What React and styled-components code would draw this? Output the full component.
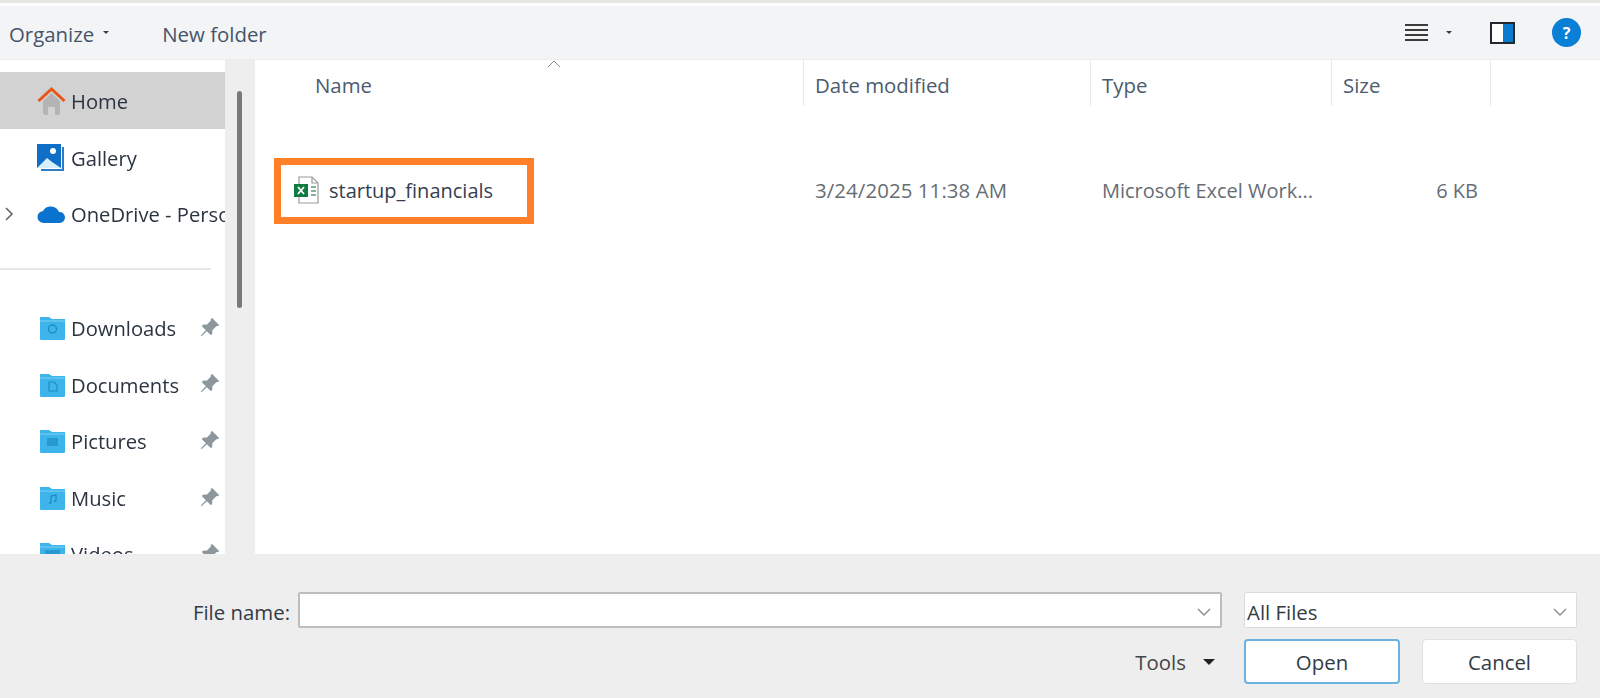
import React from "react";
import styled, { createGlobalStyle } from "styled-components";
import { BsPinAngleFill } from "react-icons/bs";

const GlobalStyle = createGlobalStyle`
  html, body { margin: 0; padding: 0; background: #fff; }
  body { font-family: "Open Sans", "Noto Sans", sans-serif; overflow: hidden; }
`;

const Dialog = styled.div`
  width: 1600px;
  height: 698px;
  display: flex;
  flex-direction: column;
  overflow: hidden;
  filter: blur(0.65px);
`;

const TopStrip = styled.div`
  height: 3px;
  background: #e4e6e2;
  margin-bottom: 3px;
  flex: none;
`;

const Toolbar = styled.div`
  height: 54px;
  flex: none;
  background: #f3f4f6;
  border-bottom: 1px solid #eceef0;
  box-sizing: border-box;
  display: flex;
  align-items: center;
  padding: 0 19px 0 9px;
  color: #44546a;
  font-size: 20.4px;
`;

const ToolText = styled.span`
  padding-top: 2px;
`;

const Caret = styled.span`
  width: 0;
  height: 0;
  border-left: ${(p) => p.$size || 3}px solid transparent;
  border-right: ${(p) => p.$size || 3}px solid transparent;
  border-top: ${(p) => p.$size || 3}px solid ${(p) => p.$color || "#333f50"};
  margin-left: ${(p) => p.$left || 0}px;
  margin-right: ${(p) => p.$right || 0}px;
`;

const ToolSpacer = styled.div`
  flex: 1;
`;

const ListLines = styled.div`
  width: 23px;
  height: 18px;
  display: flex;
  flex-direction: column;
  justify-content: space-between;
  span {
    height: 2px;
    background: #3a3a3a;
  }
`;

const PaneToggle = styled.div`
  width: 25px;
  height: 22px;
  box-sizing: border-box;
  border: 2px solid #22282e;
  display: flex;
  margin-right: 37px;
  i {
    flex: 1;
    background: #fff;
  }
  b {
    flex: 1;
    background: #0a7ccf;
  }
`;

const HelpButton = styled.div`
  width: 29px;
  height: 29px;
  border-radius: 50%;
  background: #0a7fd6;
  color: #fff;
  font-size: 16px;
  font-weight: 700;
  display: flex;
  align-items: center;
  justify-content: center;
`;

const Main = styled.div`
  flex: 1;
  min-height: 0;
  display: flex;
`;

const Sidebar = styled.div`
  width: 225px;
  flex: none;
  padding-top: 12px;
  overflow: hidden;
  background: #fff;
`;

const NavRow = styled.div`
  height: 56.6px;
  box-sizing: border-box;
  display: flex;
  align-items: center;
  position: relative;
  padding-top: 2px;
  padding-left: ${(p) => p.$indent || 37}px;
  background: ${(p) => (p.$active ? "#d2d2d2" : "transparent")};
  color: #2b3440;
  font-size: 20.2px;
  white-space: nowrap;
  overflow: hidden;
`;

const NavIcon = styled.div`
  width: ${(p) => p.$width || 34}px;
  flex: none;
  display: flex;
  align-items: center;
`;

const Expand = styled.svg`
  position: absolute;
  left: 4px;
  top: 22px;
`;

const NavPin = styled(BsPinAngleFill)`
  position: absolute;
  left: 199px;
  top: 18px;
  color: #8c979e;
  font-size: 21px;
`;

const NavDivider = styled.div`
  height: 2px;
  width: 211px;
  background: #e6e6e6;
  margin: 26.5px 0 28.5px;
`;

const ScrollTrack = styled.div`
  width: 30px;
  flex: none;
  background: #eeeeee;
  margin-right: 1px;
  padding: 31px 0 0 12px;
  box-sizing: border-box;
`;

const ScrollThumb = styled.div`
  width: 5px;
  height: 217px;
  border-radius: 3px;
  background: #77797b;
`;

const FilePane = styled.div`
  flex: 1;
  min-width: 0;
  background: #fff;
  position: relative;
`;

const HeaderRow = styled.div`
  height: 46px;
  display: grid;
  grid-template-columns: 548px 287px 241px 159px;
  color: #4c5b6e;
  font-size: 20.4px;
`;

const HeaderCell = styled.div`
  display: flex;
  align-items: center;
  padding-top: 3px;
  padding-left: ${(p) => p.$pad || 11}px;
  border-right: 1px solid #e8e8e8;
`;

const SortMark = styled.svg`
  position: absolute;
  left: 291px;
  top: 0;
`;

const FileRow = styled.div`
  margin-top: 52px;
  height: 66px;
  display: grid;
  grid-template-columns: 548px 287px 241px 146px;
  align-items: center;
  font-size: 20px;
  color: #666d74;
`;

const NameCell = styled.div`
  display: flex;
  align-items: center;
  height: 100%;
  box-sizing: border-box;
  position: relative;
  padding: 0 0 2px 38px;
  color: #333f50;
`;

const Highlight = styled.div`
  position: absolute;
  left: 18px;
  top: 0;
  width: 260px;
  height: 66px;
  box-sizing: border-box;
  border: 7px solid #ff8027;
`;

const FileIcon = styled.svg`
  margin-right: 10px;
`;

const DataCell = styled.div`
  padding: 0 0 2px 11px;
  font-size: ${(p) => p.$size || 20}px;
  letter-spacing: ${(p) => p.$track || 0}px;
  text-align: ${(p) => (p.$right ? "right" : "left")};
  white-space: nowrap;
`;

const Footer = styled.div`
  height: 144px;
  flex: none;
  background: #eeeeee;
  box-sizing: border-box;
  padding: 38px 23px 0 0;
  display: flex;
  flex-direction: column;
  gap: 11px;
`;

const FooterRow = styled.div`
  display: flex;
  align-items: center;
  justify-content: flex-end;
  color: #333b45;
  font-size: 20.4px;
`;

const FieldLabel = styled.span`
  margin-right: 8px;
  padding-top: 3px;
`;

const Field = styled.div`
  width: ${(p) => p.$width}px;
  height: 36px;
  box-sizing: border-box;
  background: #fff;
  border: ${(p) => (p.$soft ? "1px solid #dcdcdc" : "2px solid #bdbdbd")};
  border-radius: 2px;
  margin-right: ${(p) => p.$right || 0}px;
  display: flex;
  align-items: center;
  justify-content: space-between;
  padding: 3px 9px 0 2px;
`;

const ToolsLabel = styled.span`
  color: #444;
`;

const Button = styled.div`
  width: ${(p) => p.$width}px;
  height: 45px;
  box-sizing: border-box;
  background: #fff;
  border: ${(p) => (p.$primary ? "2px solid #6cb2e0" : "1px solid #e0e0e0")};
  border-radius: 4px;
  display: flex;
  align-items: center;
  justify-content: center;
  padding-top: 1px;
  margin-left: ${(p) => p.$left || 0}px;
`;

const Chevron = ({ size = 14 }) => (
  <svg width={size} height={8} viewBox="0 0 14 8" fill="none">
    <path d="M1 1l6 6 6-6" stroke="#8a8a8a" strokeWidth="1.4" />
  </svg>
);

const HomeIcon = () => (
  <svg width="29" height="28" viewBox="0 0 29 28">
    <path d="M6 14L14.5 6 23 14v12a2 2 0 0 1-2 2h-3v-8h-7v8H8a2 2 0 0 1-2-2z" fill="#b4b4b4" />
    <path d="M1.5 14L14.5 2l13 12" fill="none" stroke="#e8561a" strokeWidth="3" />
  </svg>
);

const GalleryIcon = () => (
  <svg width="29" height="28" viewBox="0 0 29 28">
    <path d="M27 3v24H4v-2h21V3z" fill="#2a7cc7" />
    <rect x="0" y="0" width="24" height="24" fill="#0f6fc6" />
    <path d="M0 24l10-10 5 4 9 6z" fill="#d8effc" />
    <circle cx="16" cy="7" r="3" fill="#fff" />
  </svg>
);

const CloudIcon = () => (
  <svg width="29" height="20" viewBox="0 0 29 20">
    <path d="M7 19a6 6 0 0 1-1-12 9 9 0 0 1 16 1 5.5 5.5 0 0 1 1 11z" fill="#0a73d0" />
  </svg>
);

const FolderIcon = ({ glyph }) => (
  <svg width="25" height="24" viewBox="0 0 25 24">
    <path d="M0 1h9l3 2h13v20a1 1 0 0 1-1 1H1a1 1 0 0 1-1-1z" fill="#3db5ea" />
    <path d="M0 5h25" stroke="#7fd0f2" strokeWidth="1" />
    {glyph === "down" && <circle cx="12.5" cy="13" r="4" fill="none" stroke="#1e8cc4" strokeWidth="1.4" />}
    {glyph === "doc" && <path d="M9 9h5l3 3v6H9z" fill="none" stroke="#1e8cc4" strokeWidth="1.2" />}
    {glyph === "pic" && <rect x="7" y="9" width="11" height="8" fill="#1e8cc4" opacity="0.7" />}
    {glyph === "music" && <path d="M11 17V10l5-1v6M11 17h-2M16 15h-2" fill="none" stroke="#1e8cc4" strokeWidth="1.3" />}
    {glyph === "video" && <rect x="5" y="8" width="15" height="10" fill="#1e8cc4" opacity="0.7" />}
  </svg>
);

const places = [
  { name: "Downloads", glyph: "down" },
  { name: "Documents", glyph: "doc" },
  { name: "Pictures", glyph: "pic" },
  { name: "Music", glyph: "music" },
  { name: "Videos", glyph: "video" },
];

const App = () => {
  return (
    <Dialog>
      <GlobalStyle />
      <TopStrip />
      <Toolbar>
        <ToolText>Organize</ToolText>
        <Caret $left={9} $right={53} />
        <ToolText>New folder</ToolText>
        <ToolSpacer />
        <ListLines>
          <span />
          <span />
          <span />
          <span />
        </ListLines>
        <Caret $left={18} $right={38} />
        <PaneToggle>
          <i />
          <b />
        </PaneToggle>
        <HelpButton>?</HelpButton>
      </Toolbar>

      <Main>
        <Sidebar>
          <NavRow $active>
            <NavIcon>
              <HomeIcon />
            </NavIcon>
            Home
          </NavRow>
          <NavRow>
            <NavIcon>
              <GalleryIcon />
            </NavIcon>
            Gallery
          </NavRow>
          <NavRow>
            <Expand width="10" height="14" viewBox="0 0 10 14" fill="none">
              <path d="M2 1l6 6-6 6" stroke="#666" strokeWidth="1.6" />
            </Expand>
            <NavIcon>
              <CloudIcon />
            </NavIcon>
            OneDrive - Personal
          </NavRow>
          <NavDivider />
          {places.map((p) => (
            <NavRow key={p.name} $indent={40}>
              <NavIcon $width={31}>
                <FolderIcon glyph={p.glyph} />
              </NavIcon>
              {p.name}
              <NavPin />
            </NavRow>
          ))}
        </Sidebar>
        <ScrollTrack>
          <ScrollThumb />
        </ScrollTrack>

        <FilePane>
          <SortMark width="14" height="8" viewBox="0 0 14 8" fill="none">
            <path d="M1 7l6-6 6 6" stroke="#888" strokeWidth="1" />
          </SortMark>
          <HeaderRow>
            <HeaderCell $pad={59}>Name</HeaderCell>
            <HeaderCell>Date modified</HeaderCell>
            <HeaderCell>Type</HeaderCell>
            <HeaderCell>Size</HeaderCell>
          </HeaderRow>
          <FileRow>
            <NameCell>
              <Highlight />
              <FileIcon width="25" height="28" viewBox="0 0 25 28">
                <path d="M5 1h13l6 6v20H5z" fill="#fff" stroke="#9a9a9a" strokeWidth="1.2" />
                <path d="M18 1v6h6" fill="none" stroke="#9a9a9a" strokeWidth="1.2" />
                <path d="M17 11h5M17 15h5M17 19h5" stroke="#7fb595" strokeWidth="2" />
                <rect x="0" y="8" width="14" height="13" fill="#107c41" />
                <path d="M4 11l6 7M10 11l-6 7" stroke="#fff" strokeWidth="1.8" />
              </FileIcon>
              startup_financials
            </NameCell>
            <DataCell $size={20.4} $track={0.1}>
              3/24/2025 11:38 AM
            </DataCell>
            <DataCell>Microsoft Excel Work...</DataCell>
            <DataCell $right>6 KB</DataCell>
          </FileRow>
        </FilePane>
      </Main>

      <Footer>
        <FooterRow>
          <FieldLabel>File name:</FieldLabel>
          <Field $width={924} $right={22}>
            <span />
            <Chevron />
          </Field>
          <Field $width={333} $soft>
            All Files
            <Chevron />
          </Field>
        </FooterRow>
        <FooterRow>
          <ToolsLabel>Tools</ToolsLabel>
          <Caret $size={6} $color="#222" $left={17} $right={29} />
          <Button $width={156} $primary>
            Open
          </Button>
          <Button $width={155} $left={22}>
            Cancel
          </Button>
        </FooterRow>
      </Footer>
    </Dialog>
  );
};

export default App;
